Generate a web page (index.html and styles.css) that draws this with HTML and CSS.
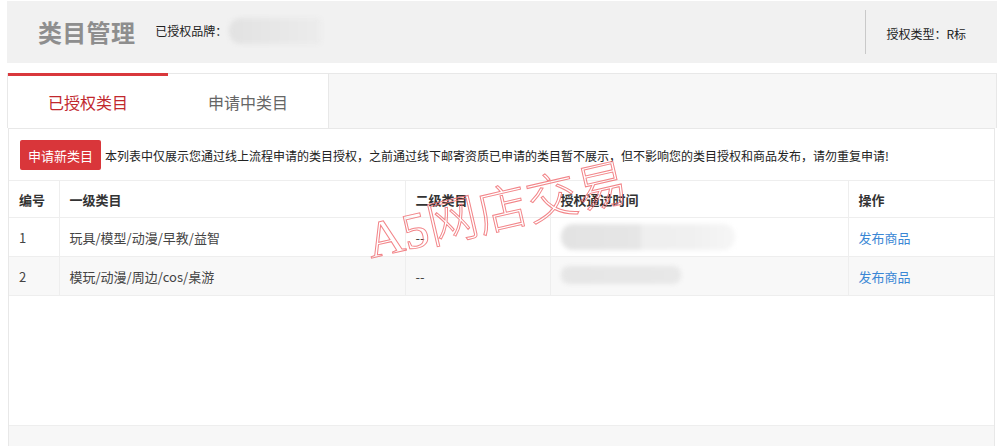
FILE: index.html
```html
<!DOCTYPE html>
<html lang="zh">
<head>
<meta charset="utf-8">
<title>类目管理</title>
<link rel="stylesheet" href="styles.css">
</head>
<body>
<div class="page">
  <header class="top">
    <div class="top-left">
      <h1 class="title">类目管理</h1>
      <span class="brand-label">已授权品牌：</span>
      <span class="blur brand-blur"></span>
    </div>
    <div class="top-right">
      <span class="auth-type">授权类型：R标</span>
    </div>
  </header>

  <nav class="tabs">
    <div class="tab active">已授权类目</div>
    <div class="tab">申请中类目</div>
  </nav>

  <section class="panel">
    <div class="toolbar">
      <button class="btn-red">申请新类目</button>
      <span class="notice">本列表中仅展示您通过线上流程申请的类目授权，之前通过线下邮寄资质已申请的类目暂不展示，但不影响您的类目授权和商品发布，请勿重复申请!</span>
    </div>
    <div class="table-wrap">
      <table class="grid">
        <colgroup>
          <col class="c1"><col class="c2"><col class="c3"><col class="c4"><col class="c5">
        </colgroup>
        <thead>
          <tr><th>编号</th><th>一级类目</th><th>二级类目</th><th>授权通过时间</th><th>操作</th></tr>
        </thead>
        <tbody>
          <tr>
            <td>1</td><td>玩具/模型/动漫/早教/益智</td><td>--</td>
            <td><span class="blur time-blur1"></span></td>
            <td><a class="link" href="#">发布商品</a></td>
          </tr>
          <tr class="alt">
            <td>2</td><td>模玩/动漫/周边/cos/桌游</td><td>--</td>
            <td><span class="blur time-blur2"></span></td>
            <td><a class="link" href="#">发布商品</a></td>
          </tr>
        </tbody>
      </table>
      <div class="watermark">A5网店交易</div>
    </div>
    <div class="spacer"></div>
    <div class="panel-foot"></div>
  </section>
</div>
</body>
</html>
```

FILE: styles.css
```css
* { box-sizing: border-box; }
html, body { margin: 0; padding: 0; background: #fff; }
body {
  font-family: "Noto Sans CJK SC", "Liberation Sans", sans-serif;
  color: #333;
  font-size: 12px;
  width: 1000px;
  height: 446px;
  overflow: hidden;
}
.page { padding: 1px 3px 0 7px; }

.top {
  height: 62px;
  background: #f1f1f1;
  display: flex;
  align-items: center;
  justify-content: space-between;
}
.top-left { display: flex; align-items: center; padding-left: 31px; }
.title {
  margin: 0;
  font-size: 24px;
  font-weight: bold;
  color: #8e8e8e;
  line-height: 30px;
  letter-spacing: 0.3px;
}
.brand-label { margin-left: 20px; font-size: 12px; color: #222; margin-top: -4px; }
.blur { display: inline-block; filter: blur(2px); }
.brand-blur {
  width: 92px; height: 26px; margin-left: 2px;
  background: linear-gradient(90deg, #e2e2e2, #e9e9e9 70%, #ececec);
  border-radius: 12px 4px 4px 12px;
  margin-top: -2px;
}
.top-right {
  height: 44px;
  border-left: 1px solid #c9c9c9;
  display: flex; align-items: center;
  padding: 0 31px 0 20px;
}
.auth-type { font-size: 12px; color: #222; margin-top: 2px; }

.tabs {
  margin-top: 10px;
  height: 55px;
  background: #f7f7f7;
  border: 1px solid #e8e8e8;
  border-bottom: none;
  display: flex;
}
.tab {
  width: 161px;
  background: #fff;
  border-right: 1px solid #e8e8e8;
  display: flex; align-items: center; justify-content: center;
  font-size: 16px;
  color: #666;
  padding-top: 2px;
}
.tab.active {
  width: 160px;
  color: #c1272d;
  border-top: 3px solid #d9383c;
  margin-top: -1px;
  border-right: none;
  padding-top: 0;
}

.panel {
  border: 1px solid #e8e8e8;
  margin-right: 2px;
  margin-left: 1px;
  background: #fff;
  display: flex;
  flex-direction: column;
}
.toolbar {
  display: flex; align-items: center;
  padding: 11px 11px 10px 11px;
}
.btn-red {
  height: 30px; width: 81px;
  background: #d9363a;
  color: #fff;
  border: none;
  border-radius: 2px;
  font-family: inherit;
  font-size: 13px;
  padding: 0;
}
.notice { margin-left: 4px; font-size: 12px; color: #222; }

.table-wrap { position: relative; }
.grid {
  width: 100%;
  border-collapse: collapse;
  table-layout: fixed;
  font-size: 13px;
}
.c1 { width: 50px; } .c2 { width: 346px; } .c3 { width: 145px; } .c4 { width: 298px; } .c5 { width: auto; }
.grid th, .grid td {
  border-top: 1px solid #eee;
  border-left: 1px solid #eee;
  text-align: left;
  padding: 0 10px;
  white-space: nowrap;
}
.grid th:first-child, .grid td:first-child { border-left: none; }
.grid th { height: 37px; font-weight: bold; color: #333; }
.grid td { height: 39px; color: #444; }
.grid tr.alt td { background: #f8f8f8; }
.grid tbody tr:last-child td { border-bottom: 1px solid #eee; }
.link { color: #3a87d5; text-decoration: none; }
.time-blur1 {
  width: 174px; height: 26px; vertical-align: middle;
  background: linear-gradient(90deg, #e3e3e3, #e6e6e6 45%, #efefef 47%, #f0f0f0 75%, #f6f6f6);
  border-radius: 12px;
}
.time-blur2 {
  width: 120px; height: 18px; vertical-align: middle;
  background: linear-gradient(90deg, #e6e6e6, #e8e8e8);
  border-radius: 8px;
  margin-top: -6px;
}
.watermark {
  position: absolute;
  left: 364px; top: 36px;
  font-family: "Liberation Serif", "Noto Sans CJK SC", serif;
  font-size: 51px;
  font-weight: 300;
  color: rgba(255, 255, 255, 0);
  -webkit-text-stroke: 1px rgba(240, 110, 115, 0.85);
  transform: rotate(-13deg);
  transform-origin: left bottom;
  white-space: nowrap;
  pointer-events: none;
  line-height: 1;
}
.spacer { height: 129px; }
.panel-foot {
  height: 30px;
  background: #f7f7f7;
  border-top: 1px solid #eee;
}
```
